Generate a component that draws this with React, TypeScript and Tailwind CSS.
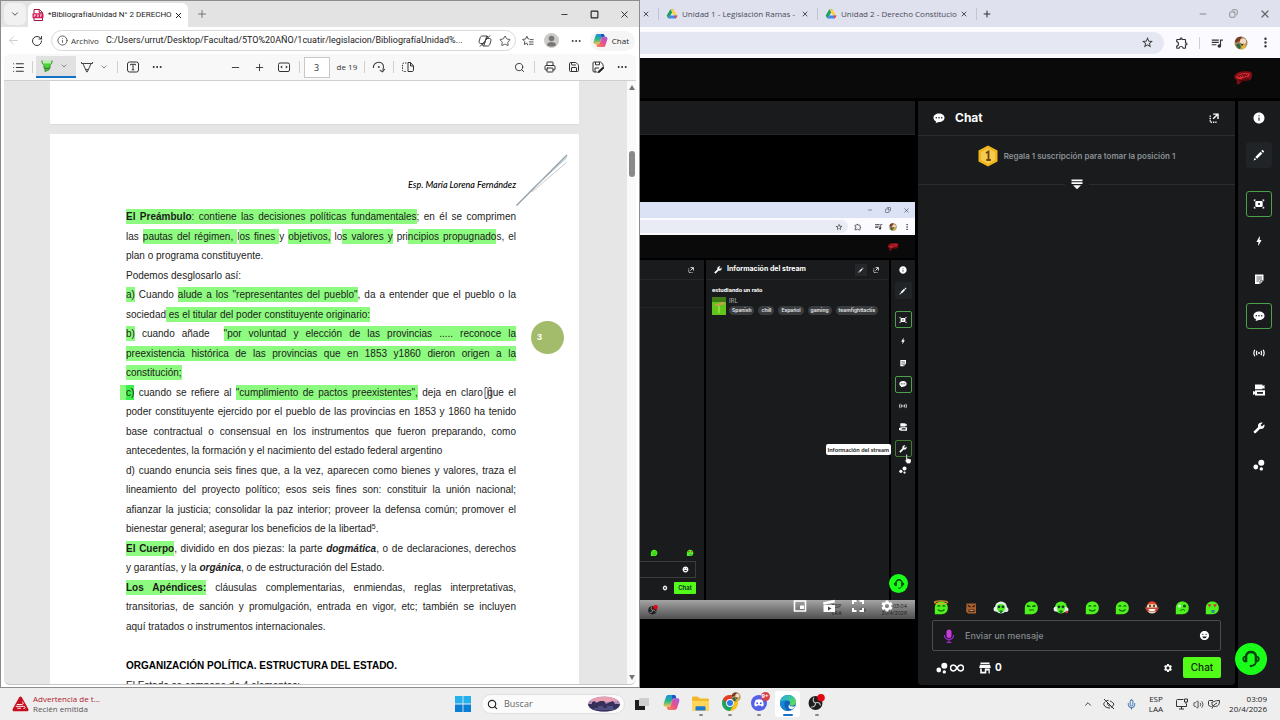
import React from "react";
import {
  ArrowLeft, RotateCw, Info, Star, Minus, Plus, X, ChevronDown, ChevronUp, Search, Printer, Save, Ellipsis,
  EllipsisVertical, Mic, Volume2, Square, Copy, List,
} from "lucide-react";
import {
  MdInfo, MdBolt, MdSettings, MdBuild, MdOutlineExtension, MdQueueMusic, MdStarBorder, MdEmojiEmotions,
} from "react-icons/md";

const ui = "font-['Open_Sans','Noto_Sans',sans-serif]";

type P = { className?: string };

function Slot({ label, className = "", children }: { label: string; className?: string; children: React.ReactNode }) {
  return (
    <button aria-label={label} className={`flex shrink-0 items-center justify-center ${className}`}>
      {children}
    </button>
  );
}

function Sep({ className = "" }: P) {
  return <span className={`h-3 w-px shrink-0 bg-[#cfcfcf] ${className}`} />;
}

/* ---------- drawings ---------- */

function PdfIcon() {
  return (
    <svg viewBox="0 0 12 12" className="size-3 shrink-0">
      <path d="M2 .5h5.500L10.500 3.500v8H2z" fill="#fff" stroke="#a01240" strokeWidth="1" />
      <path d="M7.200.5v3.200h3.200" fill="none" stroke="#a01240" />
      <rect x=".5" y="4.200" width="11" height="5" rx="1" fill="#d31b54" />
      <path d="M2.200 8V5.600h1.200v1.200H2.200M5.300 5.600v2.200h.7l.6-.6V6.100L6 5.600zM8.500 8V5.600h1.500M8.500 6.800h1.200" stroke="#fff" strokeWidth=".6" fill="none" />
    </svg>
  );
}

function Copilot({ className = "size-4" }: P) {
  const id = React.useId();
  return (
    <svg viewBox="0 0 16 16" className={`shrink-0 ${className}`}>
      <defs>
        <linearGradient id={id + "a"} x1="0" y1="0" x2="0" y2="1">
          <stop offset="0" stopColor="#1a8fe3" /><stop offset=".5" stopColor="#27b58c" /><stop offset="1" stopColor="#f2c94c" />
        </linearGradient>
        <linearGradient id={id + "b"} x1="1" y1="0" x2="0" y2="1">
          <stop offset="0" stopColor="#9b5de5" /><stop offset=".5" stopColor="#e8508f" /><stop offset="1" stopColor="#ff8a3c" />
        </linearGradient>
      </defs>
      <path d="M5 1h5.500c1 0 1.300.7 1.600 1.700L12.500 4h-2c-1 0-1.500.5-1.800 1.500L7.200 10.500C6.900 11.500 6.300 12 5.300 12H2.500C.8 12 .2 10.500.7 9L2.700 3C3.100 1.700 3.800 1 5 1z" fill={`url(#${id}a)`} />
      <path d="M11 15H5.500c-1 0-1.300-.7-1.600-1.700L3.500 12h2c1 0 1.500-.5 1.800-1.500L8.800 5.500C9.100 4.500 9.700 4 10.700 4h2.800c1.700 0 2.300 1.500 1.800 3l-2 6c-.4 1.300-1.100 2-2.300 2z" fill={`url(#${id}b)`} />
      <path d="M8.600 1h1.900c1 0 1.300.7 1.600 1.700L12.500 4h-2c-1 0-1.500.5-1.800 1.500z" fill="#1c4fc4" />
    </svg>
  );
}

function CopilotOff() {
  return (
    <svg viewBox="0 0 14 14" className="size-3.5" fill="none" stroke="#444" strokeWidth="1">
      <path d="M4.500 2h4.800l.9 2.500h1.300c1.300 0 1.800 1 1.400 2.300l-1 3.400c-.3 1-.9 1.800-2.200 1.800H5L4 9.500H2.400C1.200 9.500.8 8.500 1.200 7.200l1-3.500C2.600 2.500 3.200 2 4.500 2zM8.800 2 6.500 9.500H4M10.200 4.500H8L5.800 12M2 12.500 12 1.500" />
    </svg>
  );
}

function Drive() {
  return (
    <svg viewBox="0 0 12 11" className="h-2.5 w-3 shrink-0">
      <path d="M4.200.5h3.600L4 7.300.2 7.300z" fill="#1ea362" />
      <path d="M4.200.5h3.600L12 7.500H8.200z" fill="#ffcf48" />
      <path d="M3.800 7.200H12l-1.900 3.300H2z" fill="#4285f4" />
      <path d="M.2 7.300 4.200.5l1.700 3.200L2 10.500z" fill="#1ea362" />
      <path d="M12 7.300H8.500l1.600 3.200z" fill="#ea4335" />
    </svg>
  );
}

function Highlighter() {
  return (
    <svg viewBox="0 0 12 12" className="size-3">
      <path d="M1 .5v2L3 5.500h6l2-3v-2" fill="#b6efaa" stroke="#2f8a2a" />
      <path d="M2.500 3.500h7L9 7H3z" fill="#4fd13c" />
      <path d="M3 5.500v2.800h6V5.500M4 8.500v3l4-1.700V8.500z" fill="#4fd13c" stroke="#2f7a2a" strokeWidth=".9" />
    </svg>
  );
}

function PenNib() {
  return (
    <svg viewBox="0 0 12 12" className="size-3" fill="none" stroke="#444" strokeWidth="1">
      <path d="M.5 1v1.500h11V1M2 2.700l3.700 8.300h.6L10 2.700M4.800 8.500h2.400" />
    </svg>
  );
}

function TextBox() {
  return (
    <svg viewBox="0 0 12 12" className="size-3" fill="none" stroke="#333" strokeWidth="1">
      <rect x=".5" y="1" width="11" height="10" rx="2" />
      <path d="M3.500 4.300V3.300h5v1M6 3.300v5.500M4.800 8.800h2.400" />
    </svg>
  );
}

function FitWidth() {
  return (
    <svg viewBox="0 0 12 12" className="size-3" fill="none" stroke="#333">
      <rect x=".5" y="2" width="11" height="8.500" rx="1.500" />
      <path d="M4.200 4.500v3L2.200 6zM7.800 4.500v3l2-1.500z" fill="#333" stroke="none" />
    </svg>
  );
}

function Rotate() {
  return (
    <svg viewBox="0 0 14 12" className="h-3 w-3.5" fill="none" stroke="#444" strokeWidth="1.100">
      <path d="M1.500 7C1 3.800 3.500 1.200 6.800 1.200c4.200 0 6 4.300 4 8.300M12.800 8l-2.200 2.800L7.800 9.200" />
      <circle cx="6.800" cy="6" r="1" fill="#444" stroke="none" />
    </svg>
  );
}

function PageView() {
  return (
    <svg viewBox="0 0 12 12" className="size-3" fill="none" stroke="#333">
      <path d="M4.500 2H2C1 2 .5 2.500.5 3.500V9c0 1 .5 1.500 1.500 1.500h2.500" strokeDasharray="1.500 1" />
      <path d="M6 1.500v9h4c1 0 1.500-.5 1.500-1.500V5L8.500 1.500zM8.500 1.500V5h3" />
    </svg>
  );
}

function SaveAs() {
  return (
    <svg viewBox="0 0 12 12" className="size-3" fill="none" stroke="#333">
      <path d="M5 11H2C1.300 11 1 10.500 1 10V2c0-.6.400-1 1-1h6.500L11 3.300V5M3.500 1v2.800h4V1M3 11V7h4" />
      <path d="m11.500 5.500-5 4.500-.8 1.700 2-.4 4.300-4.300z" fill="#222" stroke="#222" strokeWidth=".7" />
    </svg>
  );
}

function FavStar() {
  return (
    <svg viewBox="0 0 13 12" className="h-3 w-3" fill="none" stroke="#444" strokeWidth="1" strokeLinejoin="round">
      <path d="M8 4 6.800 3.800 5.300.9 3.900 3.800.7 4.300 3 6.600l-.5 3.200 2.800-1.500M8.500 4.500h4M7.500 7h5M7.500 9.500h5M5.300 8.300l1 2.500" />
    </svg>
  );
}

function PopOut({ className = "size-3" }: P) {
  return (
    <svg viewBox="0 0 12 12" className={className} fill="none" stroke="#fff" strokeWidth="1.700">
      <path d="M5 1.300h5.800v5.800M10.500 1.600 5 7" />
      <path d="M1.500 3v8h7.500" strokeDasharray="1.600 1.200" />
    </svg>
  );
}

function Pencil({ className = "size-3" }: P) {
  return (
    <svg viewBox="0 0 12 12" className={className} fill="#fff">
      <path d="m2.300 8 5.200-5.200 1.800 1.800L4.100 9.800z" /><path d="m9.500.8 1.700 1.700-1.100 1.200-1.800-1.800zM1.600 8.700l1.700 1.700L.6 11.400z" />
    </svg>
  );
}

function Dots({ className = "size-3" }: P) {
  return (
    <svg viewBox="0 0 12 12" className={className} fill="#fff">
      <circle cx="8.300" cy="3.700" r="3" /><circle cx="2.800" cy="8" r="2.400" /><circle cx="8.300" cy="9.900" r="1.700" />
    </svg>
  );
}

function Raid({ className = "size-3" }: P) {
  return (
    <svg viewBox="0 0 12 12" className={className} fill="#fff">
      <path d="M3.500 3h5c.8 0 1.200.5 1.200 1.200v3.600c0 .7-.4 1.200-1.200 1.200h-5c-.8 0-1.200-.5-1.200-1.200V4.200c0-.7.4-1.200 1.200-1.200zM6 4.900a1.100 1.100 0 1 0 0 2.200 1.100 1.100 0 0 0 0-2.200z" fillRule="evenodd" />
      <path d="M.8 1.500h1.800v1H1.800v.8h-1zM11.200 1.500H9.400v1h.8v.8h1zM.8 10.500h1.800v-1H1.800v-.8h-1zM11.200 10.500H9.400v-1h.8v-.8h1z" />
    </svg>
  );
}

function Note({ className = "size-3" }: P) {
  return (
    <svg viewBox="0 0 12 12" className={className}>
      <path d="M2 1.500h8.500v6L7 11H2z" fill="#fff" />
      <path d="M3.500 4h5.500M3.500 6h5.500M3.500 8h2.500M7 11V7.800h3.500" stroke="#191b1d" strokeWidth=".7" fill="none" />
    </svg>
  );
}

function Wrench({ className = "size-3" }: P) {
  return <MdBuild className={`-scale-x-100 ${className}`} />;
}

function BigInfo({ className = "size-3" }: P) {
  return <MdInfo className={`scale-110 ${className}`} />;
}

function Store() {
  return (
    <svg viewBox="0 0 12 12" className="ml-[15px] size-3 shrink-0" fill="#fff">
      <path d="M1.500.5h9v1.500h-9zM1 2.800h10l.8 3.200H.2z" /><path d="M1.200 6.500H2.800v3.300h3V6.500h5v5H9.500v-3H7.300v3H1.200z" fillRule="evenodd" />
    </svg>
  );
}

function Headset({ className = "size-5" }: P) {
  return (
    <svg viewBox="0 0 20 20" className={className} fill="none" stroke="#06400a" strokeWidth="1.600">
      <path d="M5.500 13V8a4.500 4.500 0 0 1 9 0v5M4 12.800C1.500 12 1.500 8 4.200 7.500M16 12.800c2.500-.8 2.500-4.800-.2-5.300M4.500 7.500C5 4 7 2.500 10 2.500s5 1.500 5.500 5M15 13c-.5 2.500-2 3.500-4 3.800" />
      <path d="M4 7.500h1.500V13H4zM14.500 7.500H16V13h-1.500z" fill="#06400a" strokeWidth=".8" />
      <circle cx="10" cy="17" r="1.300" fill="#06400a" stroke="none" />
    </svg>
  );
}

function Live({ className = "size-3" }: P) {
  return (
    <svg viewBox="0 0 12 12" className={className} fill="none" stroke="#fff" strokeWidth="1.200">
      <path d="M1.800 2.800C.6 4.900.6 7.100 1.800 9.200M10.200 2.800c1.200 2.100 1.200 4.300 0 6.400M4 3.800c-.7 1.500-.7 3 0 4.400M8 3.800c.7 1.500.7 3 0 4.400" />
      <circle cx="6" cy="6" r="1" fill="#fff" stroke="none" />
    </svg>
  );
}

function Cams({ className = "size-3" }: P) {
  return (
    <svg viewBox="0 0 12 12" className={className} fill="#fff">
      <path d="M2 .5h7.500V2l2-1v4l-2-1v1.200H2zM0 7l2 .8V6.300h10v5.200H2V10l-2 1zM4 8v1.800h6V8z" fillRule="evenodd" />
    </svg>
  );
}

function CamoFace({ className = "size-3.5" }: P) {
  return (
    <svg viewBox="0 0 14 14" className={`shrink-0 ${className}`}>
      <circle cx="7" cy="7" r="6.500" fill="#b08a62" />
      <path d="M1 5C2 1 6 0 8 1L5 5 2 7z" fill="#6b3d24" /><circle cx="9" cy="5.500" r="3" fill="#f0dcc0" />
      <path d="M1.500 9 5 7l2 4-2 2.200z" fill="#2c6a3c" /><path d="m7 10 5-2-1 4-3 1.500z" fill="#d9b83a" /><circle cx="5" cy="4.500" r="1" fill="#b3261e" /><path d="m6 7 2 1 2-.5-2 2.500z" fill="#4a2c1c" />
    </svg>
  );
}

function RedLogo({ className = "h-4 w-5" }: P) {
  return (
    <svg viewBox="0 0 20 16" className={className}>
      <path d="M1 7.500C1.500 3.500 5 2 9 1.500c4-.5 9-.5 10 1.500.7 2.500-.5 5-1.500 7-3 1-6 .5-9 1.500l-2 2.500-3 .5L4 11z" fill="#7d0d14" />
      <path d="M3 7c3-4 8-4.500 14-3.500l-1 3-5 1-3 2-3-.5z" fill="#d42a33" />
      <path d="m5 5.500 1 1.500 1-2L8.500 6.500l1-2.500 1.500 2.500 1-2.500 1.500 2 1-2" stroke="#2b0305" fill="none" strokeWidth=".7" />
      <path d="M6 10c2 1 5 0 10-.5" stroke="#2f0507" fill="none" strokeWidth=".8" />
    </svg>
  );
}

function Emote({ kind }: { kind: number }) {
  const g = "#4ef21c";
  const d = "#14600a";
  return (
    <svg viewBox="0 0 16 16" className="size-4">
      {kind === 1 ? (
        <>
          <path d="M3.500 3.500h9.500v10H5L3 11.500z" fill="#a8602f" />
          <path d="M5 5.500 7.500 7M12 5.500 9.500 7" stroke="#2d160a" strokeWidth="1.300" fill="none" /><path d="M5.500 9.500h6V12h-6z" fill="#3b1d0d" /><path d="M6.500 10.300h4v.8h-4z" fill="#e8c9a8" />
        </>
      ) : kind === 2 || kind === 4 ? (
        <>
          <circle cx="8" cy="7.500" r="6" fill={kind === 2 ? "#dfeee6" : g} />
          <circle cx="3.200" cy="9" r="2.600" fill="#e9f2ee" /><circle cx="12.800" cy="9.500" r="2.600" fill="#dfe8e4" />
          <circle cx="8" cy="8" r="4" fill={g} />
          <circle cx="6" cy="6.800" r="1.400" fill="#103a2a" /><circle cx="10" cy="6.800" r="1.400" fill="#103a2a" />
          <path d="M6 11c1.500-1 2.500-1 4 0l-2 3z" fill="#157a2a" />
          {kind === 4 && <circle cx="13.500" cy="12" r="1.300" fill="#d33a3a" />}
        </>
      ) : kind === 7 ? (
        <>
          <circle cx="8" cy="8" r="5.500" fill="#f0d9b0" />
          <path d="M3 5c2-5 8-5 10 0L8 4z" fill="#e24b33" /><path d="M.5 7.500h15l-3 4h-9z" fill="#c5483a" />
          <path d="M4.500 9h7l-1 2h-5z" fill="#fff" /><circle cx="6" cy="6" r="1" fill="#222" /><circle cx="10" cy="6" r="1" fill="#222" />
        </>
      ) : (
        <>
          <path d="M1.800 14.200V8C1.800 4 4.500 1.500 8.300 1.500S14.800 4 14.800 8s-2.800 6.200-6 6.200z" fill={g} />
          {kind === 0 && <ellipse cx="8" cy="2.300" rx="6.500" ry="1.500" fill="none" stroke="#e8a02c" strokeWidth="1.200" />}
          {kind === 8 ? (
            <><circle cx="5.500" cy="6" r="1.500" fill="#eaffea" /><circle cx="10.500" cy="6" r="1.500" fill="#0c4d10" /><path d="M6 11c2-2 4-2 5 0" stroke={d} fill="none" /></>
          ) : kind === 9 ? (
            <><path d="m3.500 4 2 3.500 2-3M9 4.500l2 3 2-3.500" fill="#e22f3c" /><path d="M7 10h4l-1 3H8z" fill="#2a8aa8" /></>
          ) : kind === 3 ? (
            <path d="M4 6.500h3.500M9 6.500h3.500M4 5.300l3 1M12.500 5.300l-3 1M6 10h5" stroke={d} strokeWidth="1.100" fill="none" />
          ) : (
            <path d="M4.500 6.500c1-1.200 2-1.200 2.500 0M9.500 6.500c1-1.200 2-1.200 2.500 0M5 9.500c2 2 4.500 2 6.500 0" stroke={d} strokeWidth="1.100" fill="none" />
          )}
        </>
      )}
    </svg>
  );
}

/* ---------- left: document window ---------- */

function Hl({ children, className = "bg-[#8dfb7f]" }: { children: React.ReactNode; className?: string }) {
  return <mark className={`py-0.5 text-inherit ${className}`}>{children}</mark>;
}

function J({ children }: { children: React.ReactNode }) {
  return <span className="block whitespace-nowrap [text-align-last:justify]">{children}</span>;
}

function E({ children }: { children: React.ReactNode }) {
  return <span className="block whitespace-nowrap">{children}</span>;
}

function EdgeTabs() {
  return (
    <div className="flex h-[26px] shrink-0 items-center bg-[#e3e3e3] pl-[3px]">
      <Slot label="Pestañas" className="size-[22px] rounded-md bg-[#f1f1f1]"><ChevronDown size={10} color="#333" /></Slot>
      <div className="ml-0.5 flex h-6 w-[160px] items-center self-end rounded-t-md bg-white pl-1">
        <PdfIcon />
        <span className="ml-1 w-[124px] whitespace-nowrap font-['Roboto',sans-serif] text-[8px] text-[#222]">*BibliografíaUnidad N° 2 DERECHO</span>
        <Slot label="Cerrar pestaña" className="w-3"><X size={9} color="#111" strokeWidth={2.500} /></Slot>
      </div>
      <Slot label="Nueva pestaña" className="w-7"><Plus size={12} color="#555" strokeWidth={1.500} /></Slot>
      <div className="ml-auto flex">
        <Slot label="Minimizar" className="w-[30px]"><Minus size={9} color="#333" strokeWidth={2.500} /></Slot>
        <Slot label="Maximizar" className="w-[30px]"><Square size={9} color="#222" strokeWidth={3} /></Slot>
        <Slot label="Cerrar" className="w-[30px]"><X size={11} color="#222" strokeWidth={2} /></Slot>
      </div>
    </div>
  );
}

function EdgeAddress() {
  return (
    <div className="flex h-[27px] shrink-0 items-center bg-white">
      <Slot label="Atrás" className="w-6"><ArrowLeft size={13} color="#c4c4c4" strokeWidth={1.500} /></Slot>
      <Slot label="Recargar" className="w-6"><RotateCw size={12} color="#333" strokeWidth={2} /></Slot>
      <div className="ml-0.5 flex h-[21px] min-w-0 flex-1 items-center rounded-full border border-[#d8d8d8] pl-[5px]">
        <Info size={11} color="#444" strokeWidth={1.800} className="shrink-0" />
        <span className="ml-[3px] w-[35px] shrink-0 text-[8px] text-[#333]">Archivo</span>
        <input aria-label="Dirección" readOnly defaultValue="C:/Users/urrut/Desktop/Facultad/5TO%20AÑO/1cuatir/legislacion/BibliografíaUnidad%..." className="min-w-0 flex-1 bg-transparent font-['Roboto',sans-serif] text-[9px] text-[#222] outline-none" />
        <Slot label="Copilot en la página" className="w-5"><CopilotOff /></Slot>
        <Slot label="Favorito" className="w-5"><Star size={12} color="#444" strokeWidth={1.800} /></Slot>
      </div>
      <Slot label="Favoritos" className="w-6"><FavStar /></Slot>
      <Slot label="Perfil" className="w-6">
        <svg viewBox="0 0 15 15" className="size-[15px]"><circle cx="7.500" cy="7.500" r="7.500" fill="#cdcbc9" /><circle cx="7.500" cy="5.500" r="2.800" fill="#777" /><path d="M3 12c0-4 9-4 9 0-2 2-7 2-9 0z" fill="#777" /></svg>
      </Slot>
      <Slot label="Más" className="w-6"><Ellipsis size={12} color="#333" /></Slot>
      <button className="ml-0.5 mr-1 flex h-5 items-center gap-1 rounded-full bg-[#f5f5f5] pl-[3px] pr-1.5 text-[8px] text-[#222]"><Copilot className="size-[15px]" />Chat</button>
    </div>
  );
}

function PdfBar() {
  return (
    <div className="mx-[3px] flex h-[27px] shrink-0 items-center rounded-t-md border-b border-[#cfcfcf] bg-[#f8f8f8]">
      <Slot label="Índice" className="w-7"><List size={13} color="#333" strokeWidth={2} /></Slot>
      <Sep className="mr-[3px]" />
      <div className="flex h-[22px] w-10 items-center border-b-2 border-[#1670c4] bg-[#e1e1e1]">
        <Slot label="Resaltar" className="w-[22px]"><Highlighter /></Slot>
        <Slot label="Color de resaltado" className="w-3"><ChevronDown size={8} color="#555" /></Slot>
      </div>
      <Slot label="Dibujar" className="w-[22px]"><PenNib /></Slot>
      <Slot label="Opciones de dibujo" className="w-3"><ChevronDown size={8} color="#555" /></Slot>
      <Sep className="ml-[7px] mr-[3px]" />
      <Slot label="Agregar texto" className="w-6"><TextBox /></Slot>
      <Slot label="Más" className="w-6"><Ellipsis size={12} color="#222" /></Slot>
      <div className="min-w-0 flex-[5]" />
      <Slot label="Alejar" className="w-6"><Minus size={11} color="#333" /></Slot>
      <Slot label="Acercar" className="w-6"><Plus size={11} color="#333" /></Slot>
      <Slot label="Ajustar al ancho" className="w-6"><FitWidth /></Slot>
      <Sep className="ml-[3px] mr-1" />
      <label className="flex items-center gap-[7px] text-[8px] text-[#333]">
        <input defaultValue="3" aria-label="Página" className="h-[21px] w-[26px] border border-[#c8c8c8] bg-white text-center text-[9px]" />
        <span className="w-[21px] whitespace-nowrap">de 19</span>
      </label>
      <Sep className="ml-1.5 mr-0.5" />
      <Slot label="Girar" className="w-6"><Rotate /></Slot>
      <Sep className="mx-0.5" />
      <Slot label="Vista de página" className="w-6"><PageView /></Slot>
      <div className="min-w-0 flex-[8]" />
      <Slot label="Buscar" className="w-6"><Search size={11} color="#333" /></Slot>
      <Sep className="mx-[3px]" />
      <Slot label="Imprimir" className="w-6"><Printer size={12} color="#333" /></Slot>
      <Slot label="Guardar" className="w-6"><Save size={12} color="#333" /></Slot>
      <Slot label="Guardar como" className="w-6"><SaveAs /></Slot>
      <Slot label="Más opciones" className="mr-0.5 w-6"><Ellipsis size={12} color="#222" /></Slot>
    </div>
  );
}

function DocPage() {
  return (
    <article className="relative mt-[9px] bg-white pl-[76px] pr-[63px] pt-[45px] font-['Liberation_Sans',sans-serif] text-[10px] leading-[1.95] text-[#1c1c1c]">
      <svg viewBox="0 0 52 52" className="absolute right-[11px] top-5 size-[52px]" fill="none">
        <path d="M.5 51.500 51 1" stroke="#8d9aa1" strokeWidth="1.200" /><path d="M14 37 51 3.500" stroke="#9db5c4" strokeWidth=".8" /><path d="M16 38 51 8" stroke="#b9b9b9" strokeWidth=".7" />
      </svg>
      <span className="absolute right-[15px] top-[187px] flex size-[33px] items-center rounded-full bg-[#a3bc6b] pl-1.5 text-[9px] font-bold text-white">3</span>
      <p className="h-7 text-right font-['Lato',sans-serif] text-[9px] font-medium italic leading-[12px] text-black">Esp. María Lorena Fernández</p>
      <p>
        <J><Hl><b>El Preámbulo</b>: contiene las decisiones políticas fundamentales</Hl>; en él se comprimen</J>
        <J>las <Hl>pautas del régimen, </Hl>l<Hl>os fines </Hl>y <Hl>objetivos,</Hl> lo<Hl>s valores y</Hl> pri<Hl>ncipios propugnado</Hl>s, el</J>
        <E>plan o programa constituyente.</E>
      </p>
      <p><E>Podemos desglosarlo así:</E></p>
      <p>
        <J><Hl>a)</Hl> Cuando <Hl>alude a los "representantes del pueblo"</Hl>, da a entender que el pueblo o la</J>
        <E>sociedad<Hl> es el titular del poder constituyente originario: </Hl></E>
      </p>
      <p>
        <J><Hl>b)</Hl> cuando añade &nbsp;<Hl>"por voluntad y elección de las provincias ..... reconoce la</Hl></J>
        <J><Hl>preexistencia histórica de las provincias que en 1853 y1860 dieron origen a la</Hl></J>
        <E><Hl>constitución;</Hl></E>
      </p>
      <p>
        <J><Hl className="-ml-1.5 bg-[#8dfb7f] pl-1.5"><span className="bg-[#3cf04a] py-0.5">c)</span></Hl> cuando se refiere al <Hl>"cumplimiento de pactos preexistentes",</Hl> deja en claro que el</J>
        <J>poder constituyente ejercido por el pueblo de las provincias en 1853 y 1860 ha tenido</J>
        <J>base contractual o consensual en los instrumentos que fueron preparando, como</J>
        <E>antecedentes, la formación y el nacimiento del estado federal argentino</E>
      </p>
      <p>
        <J>d) cuando enuncia seis fines que, a la vez, aparecen como bienes y valores, traza el</J>
        <J>lineamiento del proyecto político; esos seis fines son: constituir la unión nacional;</J>
        <J>afianzar la justicia; consolidar la paz interior; proveer la defensa común; promover el</J>
        <E>bienestar general; asegurar los beneficios de la libertad<sup className="text-[7px] leading-none">5</sup>.</E>
      </p>
      <p>
        <J><Hl><b>El Cuerpo</b></Hl>, dividido en dos piezas: la parte <b><i>dogmática</i></b>, o de declaraciones, derechos</J>
        <E>y garantías, y la <b><i>orgánica</i></b>, o de estructuración del Estado.</E>
      </p>
      <p>
        <J><Hl><b>Los Apéndices:</b></Hl> cláusulas complementarias, enmiendas, reglas interpretativas,</J>
        <J>transitorias, de sanción y promulgación, entrada en vigor, etc; también se incluyen</J>
        <E>aquí tratados o instrumentos internacionales.</E>
      </p>
      <h2 className="mt-5 font-bold text-black">ORGANIZACIÓN POLÍTICA. ESTRUCTURA DEL ESTADO.</h2>
      <p><E>El Estado se compone de 4 elementos:</E></p>
      <svg viewBox="0 0 8 12" className="absolute right-[87px] top-[253px] h-3 w-2" fill="none" stroke="#333"><path d="M1 .5h2l1 1 1-1h2M1 11.500h2l1-1 1 1h2M4 1.500v9M1 .5v11M7 .5v11" strokeWidth=".8" /></svg>
    </article>
  );
}

function DocWindow() {
  return (
    <section className="flex w-1/2 shrink-0 flex-col border border-[#8d8d8d] bg-white pb-0.5">
      <EdgeTabs />
      <EdgeAddress />
      <PdfBar />
      <div className="mx-[3px] flex min-h-0 flex-1 overflow-hidden rounded-b-md border-b border-[#c8c8c8] bg-[#e6e6e6]">
        <div className="flex-1 overflow-hidden pl-[46px] pr-12">
          <div className="h-[44px] border-b border-[#dcdcdc] bg-white" />
          <DocPage />
        </div>
        <div className="flex w-[9px] flex-col items-center bg-[#fafafa] py-1">
          <span className="h-0 w-0 border-x-[3px] border-b-[5px] border-x-transparent border-b-[#777]" />
          <span className="mt-[61px] h-[26px] w-1.5 rounded-full bg-[#8a8a8a]" />
          <span className="mt-auto h-0 w-0 border-x-[3px] border-t-[5px] border-x-transparent border-t-[#777]" />
        </div>
      </div>
    </section>
  );
}

/* ---------- right: streaming dashboard ---------- */

function ChromeTab({ title }: { title: string }) {
  return (
    <div className="flex w-[159px] shrink-0 items-center border-l border-[#c2c4d2] pl-[7px]">
      <Drive />
      <span className="ml-1 w-[117px] whitespace-nowrap text-[8px] text-[#4a4b57]">{title}</span>
      <Slot label="Cerrar pestaña" className="w-3"><X size={8} color="#333" strokeWidth={2.500} /></Slot>
    </div>
  );
}

function ChromeTop() {
  return (
    <header className="shrink-0">
      <div className="flex h-[27px] items-center bg-[#dfe1ee]">
        <Slot label="Cerrar pestaña" className="mr-1.5 w-3"><X size={8} color="#333" strokeWidth={2.500} /></Slot>
        <ChromeTab title="Unidad 1 - Legislación Ramas -" />
        <ChromeTab title="Unidad 2 - Derecho Constitucio" />
        <span className="h-3 w-px bg-[#c2c4d2]" />
        <Slot label="Nueva pestaña" className="w-5"><Plus size={10} color="#333" strokeWidth={2.500} /></Slot>
        <div className="ml-auto flex">
          <Slot label="Minimizar" className="w-[31px]"><Minus size={10} color="#777" /></Slot>
          <Slot label="Restaurar" className="w-[31px]"><Copy size={9} color="#777" className="-scale-x-100" /></Slot>
          <Slot label="Cerrar" className="w-[31px]"><X size={12} color="#666" strokeWidth={2.500} /></Slot>
        </div>
      </div>
      <div className="flex h-[31px] items-center bg-[#fafaff]">
        <div className="flex h-[22px] flex-1 items-center justify-end rounded-r-full bg-[#e5e7f3] pr-2.5">
          <MdStarBorder size={13} color="#333" />
        </div>
        <Slot label="Extensiones" className="ml-1.5 w-6"><MdOutlineExtension size={14} color="#333" /></Slot>
        <Sep className="mx-[5px]" />
        <Slot label="Multimedia" className="w-6"><MdQueueMusic size={14} color="#333" /></Slot>
        <Slot label="Perfil" className="w-6"><CamoFace /></Slot>
        <Slot label="Menú" className="mr-[3px] w-6"><EllipsisVertical size={13} color="#333" strokeWidth={2.500} /></Slot>
      </div>
    </header>
  );
}

function Bubble({ className = "size-3" }: P) {
  return (
    <svg viewBox="0 0 12 12" className={className}>
      <path d="M6 1.500c3.200 0 5.500 1.700 5.500 4.200S9.200 10 6 10l-3.300 1L3 9.300C1.500 8.600.5 7.300.5 5.700.5 3.200 2.800 1.500 6 1.500z" fill="#fff" />
      <circle cx="3.300" cy="5.800" r=".8" fill="#191b1d" /><circle cx="6" cy="5.800" r=".8" fill="#191b1d" /><circle cx="8.700" cy="5.800" r=".8" fill="#191b1d" />
    </svg>
  );
}

const topTools = [
  { label: "Información", Icon: BigInfo, box: "" },
  { label: "Editar", Icon: Pencil, box: "bg-[#212427]" },
];

const tools = [
  { label: "Actividad", Icon: Raid, box: "border border-[#4fa04a]" },
  { label: "Acciones", Icon: MdBolt, box: "" },
  { label: "Notas", Icon: Note, box: "" },
  { label: "Chat", Icon: Bubble, box: "border border-[#4fa04a]" },
  { label: "Emisión", Icon: Live, box: "" },
  { label: "Cámaras", Icon: Cams, box: "" },
  { label: "Información del stream", Icon: Wrench, box: "" },
  { label: "Puntos", Icon: Dots, box: "" },
];

function ToolRail() {
  const item = "flex size-[26px] shrink-0 items-center justify-center rounded-[3px] text-white";
  return (
    <nav className="flex w-[42px] shrink-0 flex-col items-center gap-[23px] bg-[#191b1d] pt-1">
      <div className="flex flex-col gap-[11px]">
        {topTools.map(({ label, Icon, box }) => <button key={label} aria-label={label} className={`${item} ${box}`}><Icon className="size-3" /></button>)}
      </div>
      <div className="flex h-[287px] flex-col justify-between">
        {tools.map(({ label, Icon, box }) => <button key={label} aria-label={label} className={`${item} ${box}`}><Icon className="size-3" /></button>)}
      </div>
    </nav>
  );
}

function MiniRail() {
  const item = "flex size-[17px] shrink-0 items-center justify-center rounded-[2px] text-white";
  return (
    <nav className="flex w-[24px] shrink-0 flex-col items-center gap-3 bg-[#191b1d] pt-px">
      <div className="flex flex-col gap-1">
        {topTools.map(({ label, Icon, box }) => <button key={label} aria-label={label} className={`${item} ${box}`}><Icon className="size-2" /></button>)}
      </div>
      <div className="flex h-[168px] flex-col justify-between">
        {tools.map(({ label, Icon, box }) => (
          <button key={label} aria-label={label} className={`${item} ${label === "Información del stream" ? "border border-[#3f7d33]" : box}`}><Icon className="size-2" /></button>
        ))}
      </div>
    </nav>
  );
}

const tags = ["Spanish", "chill", "Español", "gaming", "teamfighttactis"];

function StreamPreview() {
  return (
    <div className="relative flex h-[417px] shrink-0 flex-col overflow-hidden bg-black font-['Inter',sans-serif]">
      <div className="flex h-4 shrink-0 items-center justify-end bg-[#dbe2f6]">
        <span className="w-[18px]"><Minus size={6} color="#333" /></span>
        <span className="w-[18px]"><Copy size={6} color="#333" className="-scale-x-100" /></span>
        <span className="w-[12px]"><X size={7} color="#333" /></span>
      </div>
      <div className="flex h-[17px] shrink-0 items-center bg-[#fafaff]">
        <div className="flex h-[13px] flex-1 items-center justify-end rounded-r-full bg-[#e9ebf5] pr-[5px]"><MdStarBorder size={8} color="#333" /></div>
        <MdOutlineExtension size={8} color="#333" className="ml-1.5" />
        <MdQueueMusic size={9} color="#333" className="ml-3" />
        <CamoFace className="ml-1.5 size-2" />
        <EllipsisVertical size={8} color="#333" className="ml-1.5 mr-1" />
      </div>
      <div className="flex h-[23px] shrink-0 items-center justify-end bg-[#0a0a0a] pr-4"><RedLogo className="h-2.5 w-3" /></div>
      <div className="flex min-h-0 flex-1 gap-0.5 pt-0.5">
        <div className="flex flex-1 flex-col bg-[#191b1d]">
          <div className="flex h-5 items-center justify-end border-b border-[#25282b] pr-2.5"><PopOut className="size-1.5" /></div>
          <div className="mt-[27px] border-t border-[#222528]" />
          <div className="mt-auto flex justify-end gap-7 pr-2.5"><span className="[&>svg]:size-2"><Emote kind={5} /></span><span className="[&>svg]:size-2"><Emote kind={9} /></span></div>
          <div className="mr-2 mt-1 flex h-[17px] items-center justify-end border border-l-0 border-[#3a3d40] pr-1.5"><MdEmojiEmotions size={7} color="#fff" /></div>
          <div className="mb-1.5 mr-2 mt-1 flex h-3 items-center justify-end gap-1.5">
            <MdSettings size={6} color="#fff" />
            <button className="h-3 w-[22px] rounded-[1px] bg-[#53fc18] text-[6px] font-semibold leading-3 text-[#112233]">Chat</button>
          </div>
        </div>
        <div className="flex w-[183px] flex-col bg-[#191b1d]">
          <div className="flex h-5 items-center border-b border-[#25282b] pl-2 pr-2.5 text-white">
            <Wrench className="size-2" />
            <h3 className="ml-[5px] flex-1 whitespace-nowrap text-[7px] font-bold">Información del stream</h3>
            <span className="mr-1.5 flex size-3 items-center justify-center bg-[#25282b]"><Pencil className="size-1.5" /></span>
            <PopOut className="size-1.5" />
          </div>
          <p className="mt-1.5 pl-1.5 font-['Roboto',sans-serif] text-[6px] font-bold leading-[8px] text-white">estudiando un rato</p>
          <div className="mt-[3px] flex gap-[3px] pl-1.5">
            <svg viewBox="0 0 14 18" className="h-[18px] w-3.5 shrink-0"><path d="M0 0h14v18H0z" fill="#62c51b" /><path d="M0 0h14v5H0z" fill="#3f7a16" /><path d="m2 8 9-3 2 2-8 2z" fill="#d79a58" /><path d="M7 9v7" stroke="#b7ef5c" /></svg>
            <div>
              <p className="text-[6px] leading-[8px] text-[#aeb2b6]">IRL</p>
              <ul className="mt-px flex gap-1 text-[5px] font-semibold leading-[9px] text-[#e8e8e8]">
                {tags.map((t) => <li key={t} className="whitespace-nowrap rounded-full bg-[#3a3d40] px-[3px]">{t}</li>)}
              </ul>
            </div>
          </div>
        </div>
        <MiniRail />
      </div>
      <div className="flex h-[19px] shrink-0 items-center justify-end bg-linear-to-b from-[#a5a5a5] to-[#505050] px-2 text-[5px] leading-[7px] text-[#222]">
        <span className="mr-auto"><Obs className="size-2.5" /></span>
        <span className="mr-[18px]">ESP<br />LAA</span><Volume2 size={6} className="mr-4" />
        <span className="text-right">03:04<br />20/4/2026</span>
      </div>

      <span role="tooltip" className="absolute right-6 top-[242px] whitespace-nowrap rounded-[2px] bg-white px-0.5 font-['Lato',sans-serif] text-[6px] font-bold leading-[11px] text-[#222]">Información del stream</span>
      <svg viewBox="0 0 8 10" className="absolute right-[3px] top-[252px] h-2.5 w-2"><path d="M2 .5h1.200v4l3.800.8v2.500L6 9.500H3L.7 6l1.300.3z" fill="#fff" stroke="#333" strokeWidth=".4" /></svg>
      <span className="absolute bottom-[26px] right-[7px] flex size-[19px] items-center justify-center rounded-full bg-[#1aff1a]"><Headset className="size-3" /></span>
      <div className="absolute bottom-[6px] right-[21px] flex items-center gap-[15px] text-white">
        <Slot label="Imagen en imagen"><svg viewBox="0 0 14 14" className="size-3.5"><path d="M1.500 2h11v10h-11z" fill="none" stroke="#fff" strokeWidth="1.600" /><path d="M7 6.500h4V10H7z" fill="#fff" /></svg></Slot>
        <Slot label="Crear clip"><svg viewBox="0 0 14 14" className="size-3.5"><path d="M1 3.200 12.500.8l.5 2.600L1.600 5.700z" fill="#fff" /><path d="M1.500 6h11.500v7h-11.500z" fill="#fff" /><path d="m6 7.500 3.500 2L6 11.500z" fill="#444" /></svg></Slot>
        <Slot label="Pantalla completa"><svg viewBox="0 0 14 14" className="size-3.5" fill="none" stroke="#fff" strokeWidth="2"><path d="M2 5V2h3.500M8.500 2H12v3M12 9v3H8.500M5.500 12H2V9" /></svg></Slot>
        <Slot label="Ajustes"><MdSettings size={14} /></Slot>
      </div>
    </div>
  );
}

function ChatPanel() {
  return (
    <section className="flex w-[317px] shrink-0 flex-col rounded-b bg-[#191b1d]">
      <div className="flex h-[35px] shrink-0 items-center border-b border-[#2a2d30] pl-[15px] pr-4">
        <Bubble />
        <h2 className="ml-2.5 flex-1 text-[12px] font-bold text-white">Chat</h2>
        <button aria-label="Abrir en ventana"><PopOut className="size-2.5" /></button>
      </div>
      <div className="flex h-10 shrink-0 items-center justify-center gap-1.5 text-[8px] font-semibold text-[#8b9196]">
        <svg viewBox="0 0 20 22" className="h-[22px] w-5">
          <path d="M10 .5 19.500 5.500v11L10 21.500.5 16.500v-11z" fill="#f2b51d" /><path d="M10 3.500 17 7v8l-7 3.800L3 15V7z" fill="#f7cb4e" />
          <path d="m8 8 2.500-1.500V15M8.300 15h4.500" stroke="#6b4306" strokeWidth="1.800" fill="none" />
        </svg>
        Regala 1 suscripción para tomar la posición 1
      </div>
      <div className="flex h-4 shrink-0 items-center">
        <span className="h-px flex-1 bg-[#2a2d30]" />
        <button aria-label="Desplegar" className="mx-1.5"><svg viewBox="0 0 12 12" className="size-3" fill="#fff"><path d="M.5 1.500h11v1.700H.5zM.5 4.300h11V6H.5zM2 7.200h8l-4 4z" /></svg></button>
        <span className="h-px flex-1 bg-[#2a2d30]" />
      </div>
      <div className="flex-1" />
      <div className="flex justify-between px-[15px]">
        {[0, 1, 2, 3, 4, 5, 6, 7, 8, 9].map((k) => <button key={k} aria-label={`Emote ${k + 1}`}><Emote kind={k} /></button>)}
      </div>
      <div className="mx-3.5 mt-1 flex h-[31px] shrink-0 items-center rounded-[2px] border border-[#4a4d50] px-2.5">
        <svg viewBox="0 0 12 14" className="h-3.5 w-3 shrink-0"><rect x="3.500" y=".5" width="5" height="8.500" rx="2.500" fill="#c93bdc" /><path d="M1.500 6c0 6 9 6 9 0M6 10.500V13M3.500 13.300h5" stroke="#9a27c4" strokeWidth="1.300" fill="none" /></svg>
        <input aria-label="Enviar un mensaje" placeholder="Enviar un mensaje" className="ml-2.5 min-w-0 flex-1 bg-transparent text-[9px] font-medium text-white outline-none placeholder:text-[#84898d]" />
        <MdEmojiEmotions size={11} color="#fff" />
      </div>
      <div className="mx-3.5 mb-[7px] mt-1.5 flex h-[21px] shrink-0 items-center pl-1 text-white">
        <Dots />
        <svg viewBox="0 0 14 8" className="ml-0.5 h-2 w-3.5" fill="none" stroke="#fff" strokeWidth="1.500"><path d="M7 4C5.500 1.500 4.500 1 3.500 1a3 3 0 0 0 0 6C4.500 7 5.500 6.500 7 4s2.500-3 3.500-3a3 3 0 0 1 0 6C9.500 7 8.500 6.500 7 4z" /></svg>
        <Store />
        <span className="ml-1 text-[10px] font-bold">0</span>
        <button aria-label="Ajustes del chat" className="ml-auto mr-2.5"><MdSettings size={10} /></button>
        <button className="h-[21px] w-[38px] rounded-[2px] bg-[#53fc18] text-[10px] font-medium text-[#10240b]">Chat</button>
      </div>
    </section>
  );
}

function Dashboard() {
  return (
    <section className="relative flex min-w-0 flex-1 flex-col bg-black">
      <ChromeTop />
      <div className="flex min-h-0 flex-1 flex-col font-['Inter',sans-serif]">
        <div className="flex h-10 shrink-0 items-center justify-end bg-[#0a0a0a] pr-[27px]"><RedLogo /></div>
        <div className="flex min-h-0 flex-1 gap-[3px] pt-[3px]">
          <div className="flex min-w-0 flex-1 flex-col">
            <div className="h-[34px] shrink-0 border-b border-[#26292c] bg-[#191b1d]" />
            <div className="h-[67px] shrink-0" />
            <StreamPreview />
          </div>
          <div className="mb-[3px] flex"><ChatPanel /></div>
          <ToolRail />
        </div>
      </div>
      <button aria-label="Soporte" className="absolute bottom-[13px] right-[13px] flex size-8 items-center justify-center rounded-full bg-[#1aff1a]"><Headset /></button>
    </section>
  );
}

/* ---------- taskbar ---------- */

function Obs({ className = "size-[17px]" }: P) {
  return (
    <svg viewBox="0 0 17 17" className={className}>
      <circle cx="7.500" cy="9" r="7" fill="#1f1d20" /><path d="M7.500 9C5 8 4.500 5.500 6 3.500M7.500 9c2.300-1.300 4.500 0 5 2.500M7.500 9c.2 2.700-1.800 4.300-4.300 4" stroke="#c9c9c9" strokeWidth="1.100" fill="none" />
      <circle cx="13" cy="3.800" r="3.800" fill="#e30613" />
    </svg>
  );
}

function TaskApp({ label, active, dot, children }: { label: string; active?: boolean; dot?: boolean; children: React.ReactNode }) {
  return (
    <button aria-label={label} className={`flex h-[26px] w-[25px] shrink-0 flex-col items-center justify-end rounded-[3px] pb-px ${active ? "bg-white" : ""}`}>
      {children}
      <span className={`mt-[3px] h-0.5 rounded-full ${active ? "w-2.5 bg-[#1670c4]" : dot ? "w-1 bg-[#888]" : "w-1"}`} />
    </button>
  );
}

function Taskbar() {
  return (
    <footer className="flex h-8 shrink-0 items-center bg-[#eeeeee] text-[#222]">
      <button className="flex flex-1 items-center gap-1 pl-3 text-left text-[8px] leading-[10px]">
        <svg viewBox="0 0 18 16" className="h-4 w-[17px]"><path d="M7.500 1c.7-1.200 2.300-1.200 3 0l6.800 12.300c.6 1.200-.1 2.500-1.500 2.500H2.200C.8 15.800.1 14.500.7 13.300z" fill="#c50f1f" /><path d="M5 8.500h5.500c1.800 0 1.800-2.500.2-2.500M4 10.500h8.500c2 0 1.500 2.800-.3 2.300M5.500 12.500h4" stroke="#fff" fill="none" /></svg>
        <span><span className="block text-[#b01a2c]">Advertencia de t...</span><span className="block text-[#555]">Recién emitida</span></span>
      </button>
      <div className="flex items-center pl-[5px]">
        <Slot label="Inicio" className="mr-2.5 w-4"><svg viewBox="0 0 16 16" className="size-4"><path d="M0 0h7.600v7.600H0zM8.400 0H16v7.600H8.400z" fill="#27b1ec" /><path d="M0 8.400h7.600V16H0zM8.400 8.400H16V16H8.400z" fill="#0b7fd6" /></svg></Slot>
        <label className="flex h-5 w-36 items-center rounded-full border border-[#e0e0e0] bg-[#fbfbfb] pl-[5px]">
          <Search size={11} color="#222" strokeWidth={2.500} className="shrink-0" />
          <input aria-label="Buscar" placeholder="Buscar" className="ml-1.5 w-[84px] bg-transparent text-[9px] outline-none placeholder:text-[#666]" />
          <svg viewBox="0 0 32 16" className="h-4 w-8 shrink-0"><ellipse cx="16" cy="8" rx="16" ry="7.500" fill="#a98bb5" /><path d="M2 5c6-5 22-6 28 0l-5 1H6z" fill="#e9a0b2" /><path d="M0 8h4V6l3-1 1 2 4-2h4l2 3 4-2 3-1 2 3h5c-.5 5-7 7.500-16 7.500S.5 13 0 8z" fill="#37305a" /><path d="M6 13h20M10 11h5M19 11h6" stroke="#7284b8" strokeWidth=".8" /></svg>
        </label>
        <div className="ml-1 flex items-center gap-1">
          <Slot label="Vista de tareas" className="w-[26px]"><svg viewBox="0 0 14 12" className="h-3 w-3.5"><path d="M4 0h10v8H4z" fill="#cfcfcf" /><path d="M0 2h4v6h6v4H0z" fill="#1d1d1d" /></svg></Slot>
          <TaskApp label="Copilot"><Copilot className="size-[17px]" /></TaskApp>
          <TaskApp label="Explorador" dot><svg viewBox="0 0 17 15" className="h-[15px] w-[17px]"><path d="M0 2C0 1 .5.5 1.500.5h4L8 2.500h7.500c1 0 1.500.5 1.500 1.500v10.500H0z" fill="#f3b72a" /><path d="M0 5h17v8.500c0 .6-.4 1-1 1H1c-.6 0-1-.4-1-1z" fill="#ffd65c" /><path d="M3.500 14.500v-3c0-.8.500-1.200 1.200-1.200h7.600c.7 0 1.200.4 1.200 1.200v3z" fill="#1c7bd0" /></svg></TaskApp>
          <TaskApp label="Chrome" dot>
            <span className="relative">
              <svg viewBox="0 0 16 16" className="size-4"><circle cx="8" cy="8" r="8" fill="#fbc116" /><path d="M8 4H1.100A8 8 0 0 0 8 16l3.500-6z" fill="#1da462" /><path d="M1.100 4A8 8 0 0 1 14.900 4H8L4.500 8z" fill="#e33b2e" /><circle cx="8" cy="8" r="3.900" fill="#fff" /><circle cx="8" cy="8" r="3" fill="#2f78e8" /></svg>
              <CamoFace className="absolute -right-[3px] -top-[3px] size-2.5" />
            </span>
          </TaskApp>
          <TaskApp label="Discord" dot>
            <span className="relative">
              <svg viewBox="0 0 16 16" className="size-4"><circle cx="8" cy="8" r="8" fill="#5460e6" /><path d="M5 4.800c2-.7 4-.7 6 0 1.200 1.700 1.800 3.600 1.600 5.700-.8.700-1.600 1-2.300 1l-.6-1H6.300l-.6 1c-.8 0-1.600-.4-2.300-1C3.200 8.400 3.800 6.500 5 4.800z" fill="#fff" /><circle cx="6.200" cy="8.300" r="1" fill="#5460e6" /><circle cx="9.800" cy="8.300" r="1" fill="#5460e6" /></svg>
              <span className="absolute -right-[3px] -top-[3px] size-[9px] rounded-full bg-[#d8404c] text-center text-[6px] font-bold leading-[9px] text-white">9+</span>
            </span>
          </TaskApp>
          <TaskApp label="Edge" active>
            <svg viewBox="0 0 16 16" className="size-4">
              <defs><linearGradient id="edge" x1="0" y1="0" x2="1" y2=".6"><stop offset="0" stopColor="#2aa6e8" /><stop offset=".6" stopColor="#35c6a0" /><stop offset="1" stopColor="#64dc56" /></linearGradient></defs>
              <circle cx="8" cy="8" r="8" fill="#0e62b8" /><path d="M0 8C0 3 4 0 8 0c5 0 8 3.500 8 6.800 0 2.700-2 4-4.300 4-1.500 0-2.200-.6-2-1.200.8-1.200.8-4-2.700-4C3.500 5.600.6 7 0 8z" fill="url(#edge)" /><path d="M0 8c.8-2 3.500-2.800 6-2.400C3.800 7 3.500 12.500 8 15.900 3 16 0 12 0 8z" fill="#1784d8" /><path d="M9.500 9.600c-.3 1 .8 2 3 2 1 0 2-.3 2.700-.6-.8 1.600-1.800 2.800-3.200 3.300-3 .3-4.700-3-2.500-4.700z" fill="#eef6fb" />
            </svg>
          </TaskApp>
          <TaskApp label="OBS" dot><Obs /></TaskApp>
        </div>
      </div>
      <div className="flex flex-1 items-center justify-end pr-[13px] text-[8px] leading-[10px]">
        <Slot label="Iconos ocultos" className="w-5"><ChevronUp size={10} /></Slot>
        <Slot label="Cámara desactivada" className="w-[22px]"><svg viewBox="0 0 12 12" className="size-3" fill="none" stroke="#333"><path d="M3.500 2.500h2M1 1l10 10M7 3c2 .5 2.500 1.500 4 3-1 2-1.500 2.500-3 3.500M2.500 3.500C.5 5 .5 6 1 7c1 2 3 3 6 3M4.500 5c0 2 1 3 3 3" /></svg></Slot>
        <Slot label="Micrófono" className="w-[22px]"><Mic size={11} color="#2a62a8" /></Slot>
        <span className="w-7 text-center">ESP<br />LAA</span>
        <Slot label="Pantalla" className="ml-1 w-4"><svg viewBox="0 0 12 12" className="size-3" fill="none" stroke="#333"><path d="M7.500 1.500H1.500c-.6 0-1 .4-1 1v6h10V6M3 11h5M5.500 8.500V11M8.500 1h3v3h-3zM10 4v2" /></svg></Slot>
        <Slot label="Volumen" className="w-4"><Volume2 size={11} color="#444" /></Slot>
        <Slot label="Batería" className="w-4"><svg viewBox="0 0 12 12" className="size-3" fill="none" stroke="#333"><path d="M5 2.500H1.500c-.6 0-1 .4-1 1v3c0 1 1 2 3 2M4 4c2 0 3-1.500 7.500-1.500C11.500 7 10 8.500 6.500 8.500 4.500 8.500 3.500 6 4 4zM4 10.500C5 8 6.500 6 9 5" /></svg></Slot>
        <time className="w-[45px] text-right">03:09<br />20/4/2026</time>
      </div>
    </footer>
  );
}

export default function App() {
  return (
    <div className={`flex h-screen flex-col overflow-hidden bg-black ${ui}`}>
      <main className="flex min-h-0 flex-1">
        <DocWindow />
        <Dashboard />
      </main>
      <Taskbar />
    </div>
  );
}
